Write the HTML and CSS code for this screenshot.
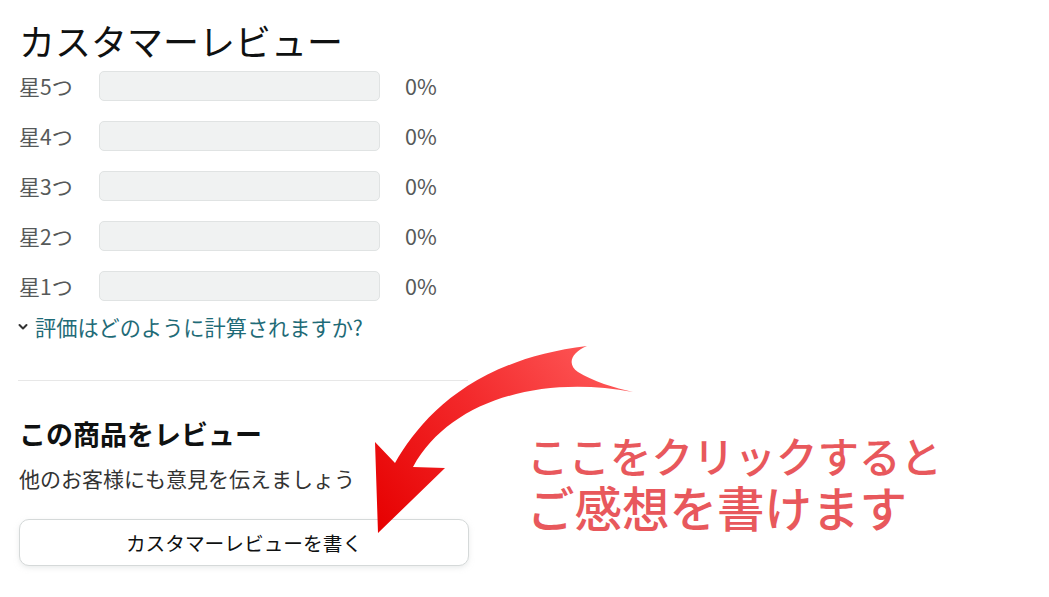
FILE: index.html
```html
<!DOCTYPE html>
<html lang="ja">
<head>
<meta charset="utf-8">
<link rel="stylesheet" href="styles.css">
</head>
<body>
<div class="page">
  <section class="reviews">
    <h2 class="title">カスタマーレビュー</h2>
    <div class="hist">
      <div class="row"><span class="lbl">星5つ</span><span class="meter"><span class="fill" style="width:0%"></span></span><span class="pct">0%</span></div>
      <div class="row"><span class="lbl">星4つ</span><span class="meter"><span class="fill" style="width:0%"></span></span><span class="pct">0%</span></div>
      <div class="row"><span class="lbl">星3つ</span><span class="meter"><span class="fill" style="width:0%"></span></span><span class="pct">0%</span></div>
      <div class="row"><span class="lbl">星2つ</span><span class="meter"><span class="fill" style="width:0%"></span></span><span class="pct">0%</span></div>
      <div class="row"><span class="lbl">星1つ</span><span class="meter"><span class="fill" style="width:0%"></span></span><span class="pct">0%</span></div>
    </div>
    <a class="how" href="#"><svg class="chev" viewBox="0 0 10 8" width="10" height="8"><path d="M1.5 2 L5 5.5 L8.5 2" fill="none" stroke="#333" stroke-width="2" stroke-linecap="round" stroke-linejoin="round"/></svg>評価はどのように計算されますか?</a>
    <hr class="divider">
    <h3 class="write-title">この商品をレビュー</h3>
    <p class="write-sub">他のお客様にも意見を伝えましょう</p>
    <button class="write-btn">カスタマーレビューを書く</button>
  </section>

  <svg class="arrow" width="1049" height="597" viewBox="0 0 1049 597">
    <defs>
      <linearGradient id="ag" x1="378" y1="533" x2="620" y2="350" gradientUnits="userSpaceOnUse">
        <stop offset="0" stop-color="#e60000"/>
        <stop offset="0.5" stop-color="#f3292b"/>
        <stop offset="1" stop-color="#ff5c5c"/>
      </linearGradient>
    </defs>
    <path fill="url(#ag)" d="M587,346 C572,352 566,364 578,372 C592,381 615,388 633,392 C540,375 450,400 413,467 L445,468 L378,533 L375,442 L395,463 C420,420 470,360 587,346 Z"/>
  </svg>

  <div class="callout">
    <div class="c1">ここをクリックすると</div>
    <div class="c2">ご感想を書けます</div>
  </div>
</div>
</body>
</html>
```

FILE: styles.css
```css
html, body {
  margin: 0;
  padding: 0;
  background: #ffffff;
}
body {
  font-family: "Noto Sans CJK JP", "Noto Sans", sans-serif;
  color: #0f1111;
}
.page {
  position: relative;
  width: 1049px;
  height: 597px;
  overflow: hidden;
}
.reviews {
  width: 450px;
  padding: 18px 0 0 19px;
  display: flex;
  flex-direction: column;
}
.title {
  margin: 0;
  font-size: 36px;
  line-height: 44px;
  font-weight: 400;
  color: #0f1111;
}
.hist {
  margin-top: 9px;
  display: flex;
  flex-direction: column;
  gap: 20px;
}
.row {
  display: flex;
  align-items: center;
  height: 30px;
}
.lbl {
  width: 80px;
  font-size: 21px;
  color: #565959;
  line-height: 30px;
}
.meter {
  width: 281px;
  height: 30px;
  box-sizing: border-box;
  background: #f0f2f2;
  border: 1px solid #e0e3e3;
  border-radius: 5px;
  overflow: hidden;
  display: flex;
}
.fill {
  background: #de7921;
  height: 100%;
}
.pct {
  margin-left: 25px;
  font-size: 21.5px;
  color: #565959;
  line-height: 30px;
}
.how {
  margin-top: 13px;
  display: flex;
  align-items: center;
  gap: 7px;
  font-size: 21.2px;
  line-height: 26px;
  color: #1f6b77;
  text-decoration: none;
  margin-left: -1px;
}
.chev {
  flex: none;
}
.divider {
  margin: 40px 0 0 -1px;
  width: 450px;
  border: 0;
  border-top: 1px solid #e7e7e7;
  height: 0;
}
.write-title {
  margin: 36px 0 0 0;
  font-size: 27px;
  line-height: 34px;
  font-weight: 700;
  color: #0f1111;
}
.write-sub {
  margin: 13px 0 0 0;
  font-size: 21px;
  line-height: 28px;
  color: #333;
}
.write-btn {
  margin: 27px 0 0 0;
  width: 450px;
  height: 47px;
  box-sizing: border-box;
  background: #fff;
  border: 1px solid #d5d9d9;
  border-radius: 10px;
  box-shadow: 0 2px 5px rgba(213, 217, 217, 0.5);
  font-family: "Noto Sans CJK JP", "Noto Sans", sans-serif;
  font-size: 19.7px;
  color: #0f1111;
  padding: 0;
}
.arrow {
  position: absolute;
  left: 0;
  top: 0;
  pointer-events: none;
}
.callout {
  position: absolute;
  left: 527px;
  top: 434px;
  color: #e8585c;
  font-family: "Liberation Sans", "Noto Sans CJK JP", sans-serif;
  font-weight: 500;
}
.c1 {
  font-size: 41.5px;
  line-height: 50px;
}
.c2 {
  font-size: 47.5px;
  line-height: 53px;
}
```
